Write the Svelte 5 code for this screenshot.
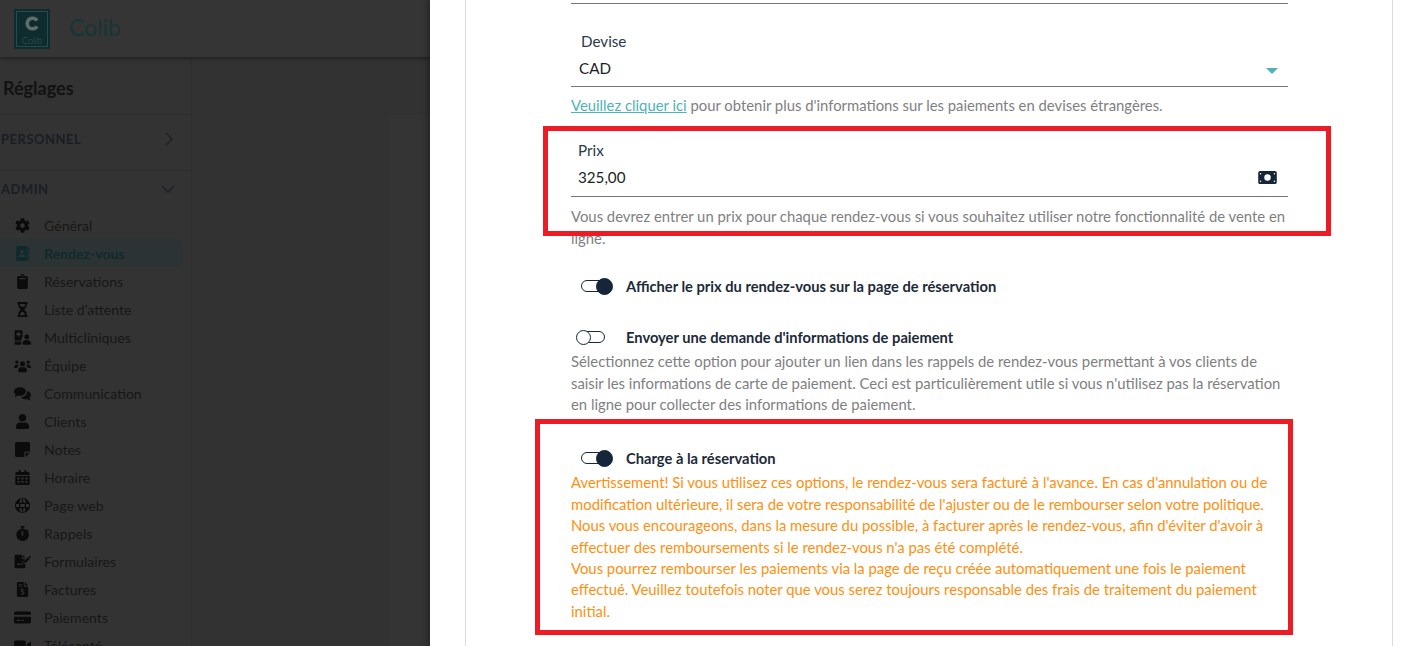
<script>
	const nav = [
		{ label: 'Général', box: '0 0 512 512', d: 'M487.4 315.7l-42.6-24.6c4.3-23.2 4.3-47 0-70.2l42.6-24.6c4.9-2.8 7.1-8.6 5.5-14-11.1-35.6-30-67.8-54.7-94.6-3.8-4.1-10-5.1-14.8-2.3L380.8 110c-17.9-15.4-38.5-27.3-60.8-35.1V25.8c0-5.6-3.9-10.5-9.4-11.7-36.7-8.2-74.3-7.8-109.2 0-5.5 1.2-9.4 6.1-9.4 11.7V75c-22.2 7.9-42.8 19.8-60.8 35.1L88.7 85.5c-4.9-2.8-11-1.9-14.8 2.3-24.7 26.7-43.6 58.9-54.7 94.6-1.7 5.4.6 11.2 5.5 14L67.3 221c-4.3 23.2-4.3 47 0 70.2l-42.6 24.6c-4.9 2.8-7.1 8.6-5.5 14 11.1 35.6 30 67.8 54.7 94.6 3.8 4.1 10 5.1 14.8 2.3l42.6-24.6c17.9 15.4 38.5 27.3 60.8 35.1v49.2c0 5.6 3.9 10.5 9.4 11.7 36.7 8.2 74.3 7.8 109.2 0 5.5-1.2 9.4-6.1 9.4-11.7v-49.2c22.2-7.9 42.8-19.8 60.8-35.1l42.6 24.6c4.9 2.8 11 1.9 14.8-2.3 24.7-26.7 43.6-58.9 54.7-94.6 1.5-5.5-.7-11.3-5.6-14.1zM256 336c-44.1 0-80-35.9-80-80s35.9-80 80-80 80 35.9 80 80-35.9 80-80 80z' },
		{ label: 'Rendez-vous', box: '0 0 24 24', d: 'M4 0h14a2 2 0 0 1 2 2v20a2 2 0 0 1-2 2H4a2 2 0 0 1-2-2V2a2 2 0 0 1 2-2zM11 6a3 3 0 1 0 0 6 3 3 0 0 0 0-6zM5.500 17.500h11c0-2.500-2-4-5.500-4s-5.500 1.500-5.500 4zM21 3h2v5h-2zM21 10h2v5h-2zM21 17h2v4h-2z', active: true },
		{ label: 'Réservations', box: '0 0 24 24', d: 'M9 3a3 3 0 0 1 6 0h3a2.500 2.500 0 0 1 2.500 2.500v16A2.500 2.500 0 0 1 18 24H6a2.500 2.500 0 0 1-2.500-2.500v-16A2.500 2.500 0 0 1 6 3zM12 2a1.300 1.300 0 1 0 0 2.600A1.300 1.300 0 0 0 12 2zM7 6.500v2h10v-2z' },
		{ label: "Liste d'attente", box: '0 0 24 24', d: 'M4 0h16v3h-1c0 5-2.500 7-4.500 9 2 2 4.500 4 4.500 9h1v3H4v-3h1c0-5 2.500-7 4.500-9C7.500 10 5 8 5 3H4zM8 3c0 1.500.300 3 1 4.500h6c.700-1.500 1-3 1-4.500zM8 21h8c0-2.500-1.800-5-4-6-2.200 1-4 3.500-4 6z' },
		{ label: 'Multicliniques', box: '0 0 28 24', d: 'M1 2a2 2 0 0 1 2-2h9a2 2 0 0 1 2 2v8.500a7 7 0 0 0-2 5V17H1zM6 3v2.500H3.500v2.500H6v2.500h3V8h2.500V5.500H9V3zM1 18.500h11V22a2 2 0 0 1-2 2H3a2 2 0 0 1-2-2zM21 7a4 4 0 1 1 0 8 4 4 0 0 1 0-8zM14 22c0-3.500 2.500-6 7-6s7 2.500 7 6a2 2 0 0 1-2 2H16a2 2 0 0 1-2-2z' },
		{ label: 'Équipe', box: '0 0 30 24', d: 'M5 3a3 3 0 1 1 0 6 3 3 0 0 1 0-6zM25 3a3 3 0 1 1 0 6 3 3 0 0 1 0-6zM15 4.500a4.500 4.500 0 1 1 0 9 4.500 4.500 0 0 1 0-9zM0 16c0-3 1.500-5.500 4-5.500h3c.8 0 1.500.2 2 .6-1.800 1-3 3-3.300 5.400H2a2 2 0 0 1-2-.5zM30 16c0-3-1.500-5.500-4-5.500h-3c-.8 0-1.500.2-2 .6 1.800 1 3 3 3.300 5.400H28a2 2 0 0 0 2-.5zM7.500 20c0-3 2-5 4.500-5h6c2.500 0 4.500 2 4.500 5v1.500A2.500 2.500 0 0 1 20 24H10a2.500 2.500 0 0 1-2.500-2.500z' },
		{ label: 'Communication', box: '0 0 30 24', d: 'M10.500 1C16 1 21 4.300 21 8.500S16 16 10.500 16c-1.300 0-2.500-.2-3.600-.5C5 17 3 17.800.5 18c1.500-1.400 2.300-2.800 2.600-4C1 12.500 0 10.600 0 8.500 0 4.300 5 1 10.500 1zM23 7.500c3.800 1 7 3.700 7 7 0 2-1 3.800-3 5.300.3 1.300 1.100 2.700 2.500 4.200-2.500-.2-4.500-1.100-6.300-2.500-1 .3-2.100.5-3.200.5-3.300 0-6.300-1.300-8-3.300 6.500-.2 11.800-4.500 11-11.200z' },
		{ label: 'Clients', box: '0 0 448 512', d: 'M224 256c70.700 0 128-57.300 128-128S294.700 0 224 0 96 57.300 96 128s57.300 128 128 128zm89.600 32h-16.700c-22.200 10.200-46.900 16-72.900 16s-50.600-5.800-72.900-16h-16.700C60.200 288 0 348.200 0 422.400V464c0 26.500 21.500 48 48 48h352c26.500 0 48-21.500 48-48v-41.600c0-74.200-60.200-134.400-134.400-134.400z' },
		{ label: 'Notes', box: '0 0 24 24', d: 'M2.500 0h19A2.500 2.500 0 0 1 24 2.500V15h-7a2 2 0 0 0-2 2v7H2.500A2.500 2.500 0 0 1 0 21.500v-19A2.500 2.500 0 0 1 2.500 0zM24 17l-7 7v-7z' },
		{ label: 'Horaire', box: '0 0 24 24', d: 'M6 0h3v3h6V0h3v3h3a2.500 2.500 0 0 1 2.500 2.500V8H.5V5.500A2.500 2.500 0 0 1 3 3h3zM.5 9.500h23v12A2.500 2.500 0 0 1 21 24H3a2.500 2.500 0 0 1-2.500-2.500zM4 12v3h3.500v-3zM10.200 12v3h3.500v-3zM16.500 12v3H20v-3zM4 17.500v3h3.500v-3zM10.200 17.500v3h3.500v-3zM16.500 17.500v3H20v-3z' },
		{ label: 'Page web', box: '0 0 24 24', d: 'M12 0a12 12 0 1 1 0 24 12 12 0 0 1 0-24zM9 1.800C7.700 3.500 7 5.500 6.700 7.500h3.800c.2-2 .6-4.300 1-6.200-.9 0-1.700.2-2.500.5zM15 1.800c1.300 1.700 2 3.700 2.300 5.700h-3.800c-.2-2-.6-4.300-1-6.200.9 0 1.700.2 2.500.5zM1.800 9.500a11 11 0 0 0 0 5h4.700a24 24 0 0 1 0-5zM8.500 9.500a24 24 0 0 0 0 5h7a24 24 0 0 0 0-5zM17.500 9.500a24 24 0 0 1 0 5h4.700a11 11 0 0 0 0-5zM6.700 16.500c.3 2 1 4 2.300 5.700.8.300 1.600.5 2.500.5-.4-1.900-.8-4.200-1-6.200zM13.500 16.500c-.2 2-.6 4.300-1 6.200.9 0 1.700-.2 2.500-.5 1.300-1.700 2-3.700 2.300-5.700z' },
		{ label: 'Rappels', box: '0 0 24 24', d: 'M9 0h6v2.500h-1.500v1.700c2 .3 3.800 1.100 5.300 2.400l1.200-1.200 1.800 1.800-1.300 1.300A10 10 0 1 1 10.500 4.200V2.500H9zM10.800 8v7.500h2.400V8z' },
		{ label: 'Formulaires', box: '0 0 30 24', d: 'M1 2a2 2 0 0 1 2-2h11v6a1.500 1.500 0 0 0 1.500 1.500H20L13 14.500 12.500 18h-7l2-4 2 2.500 2.500 1h-1l3.500.5L20 13v9a2 2 0 0 1-2 2H3a2 2 0 0 1-2-2zM15.500 0l4.500 5.500h-4.500zM25 4l3 3-10 10-4 1 1-4zM26 3l1.500-1.500 3 3L29 6z' },
		{ label: 'Factures', box: '0 0 24 24', d: 'M5 0h9v6a1.500 1.500 0 0 0 1.500 1.500H21v14A2.500 2.500 0 0 1 18.500 24h-13A2.500 2.500 0 0 1 3 21.500v-19A2.500 2.500 0 0 1 5 0zM6 3v1.500h5V3zM6 6v1.500h5V6zM11.300 10v1.300c-1.400.2-2.300 1.200-2.300 2.400 0 1.400 1 2 2.300 2.400l1.500.4c.5.2.7.4.7.7 0 .4-.4.7-1 .7H10v1.500h1.300V21h1.500v-1.400c1.400-.2 2.300-1.200 2.300-2.400 0-1.400-1-2-2.300-2.400l-1.500-.4c-.5-.2-.7-.4-.7-.7 0-.4.4-.7 1-.7H14v-1.500h-1.200V10zM15.500 0L21 5.500h-5.500z' },
		{ label: 'Paiements', box: '0 0 30 24', d: 'M3 1.500h24A3 3 0 0 1 30 4.500V7H0V4.500A3 3 0 0 1 3 1.500zM0 10.500h30v9a3 3 0 0 1-3 3H3a3 3 0 0 1-3-3zM5 16v2h6v-2zM13 16v2h4v-2z' },
		{ label: 'Télésanté', box: '0 0 30 24', d: 'M3 3h15a3 3 0 0 1 3 3v12a3 3 0 0 1-3 3H3a3 3 0 0 1-3-3V6a3 3 0 0 1 3-3zM23 9l7-4v14l-7-4z' }
	];
</script>

<div class="page">
	<div class="backdrop">
		<header class="topbar">
			<div class="logo">
				<div class="logo-inner">
					<svg viewBox="0 0 24 24" class="logo-c"><path d="M12 2a10 10 0 1 0 8.500 15.300l-4.300-2.500a5 5 0 1 1 0-5.600l4.300-2.500A10 10 0 0 0 12 2z" /></svg>
					<span>Colib</span>
				</div>
			</div>
			<span class="brand">Colib</span>
		</header>
		<div class="under">
			<aside class="sidebar">
				<h2>Réglages</h2>
				<div class="group">
					<span>PERSONNEL</span>
					<svg viewBox="0 0 12 16" class="chev"><path d="M3 2l6 6-6 6" /></svg>
				</div>
				<div class="group admin">
					<span>ADMIN</span>
					<svg viewBox="0 0 16 12" class="chev wide"><path d="M2 3l6 6 6-6" /></svg>
				</div>
				<nav>
					{#each nav as item}
						<div class="nav-item" class:active={item.active}>
							<span class="nav-icon"><svg viewBox={item.box}><path fill-rule="evenodd" d={item.d} /></svg></span>
							<span>{item.label}</span>
						</div>
					{/each}
				</nav>
			</aside>
			<div class="bg-main">
				<div class="bg-card"></div>
			</div>
		</div>
	</div>

	<section class="drawer">
		<div class="card">
			<div class="prev-line"></div>

			<div class="field devise">
				<div class="label">Devise</div>
				<div class="control">
					<span>CAD</span>
					<span class="caret"></span>
				</div>
			</div>
			<p class="hint"><a href="#devises">Veuillez cliquer ici</a> pour obtenir plus d'informations sur les paiements en devises étrangères.</p>

			<div class="field prix">
				<div class="label">Prix</div>
				<div class="control">
					<span>325,00</span>
					<svg class="money" viewBox="0 0 20 14"><path fill-rule="evenodd" d="M2 0h16a2 2 0 0 1 2 2v10a2 2 0 0 1-2 2H2a2 2 0 0 1-2-2V2a2 2 0 0 1 2-2zM10 3.500a3.500 3.500 0 1 0 0 7 3.500 3.500 0 0 0 0-7zM2.500 2.200a.8.8 0 1 0 0 1.600.8.8 0 0 0 0-1.600zM17.500 2.200a.8.8 0 1 0 0 1.600.8.8 0 0 0 0-1.600zM2.500 10.200a.8.8 0 1 0 0 1.600.8.8 0 0 0 0-1.600zM17.500 10.200a.8.8 0 1 0 0 1.600.8.8 0 0 0 0-1.600z" /></svg>
				</div>
			</div>
			<p class="hint prix-hint">Vous devrez entrer un prix pour chaque rendez-vous si vous souhaitez utiliser notre fonctionnalité de vente en ligne.</p>

			<div class="toggle-row first">
				<span class="switch on"><i></i></span>
				<strong>Afficher le prix du rendez-vous sur la page de réservation</strong>
			</div>

			<div class="toggle-row second">
				<span class="switch"><i></i></span>
				<strong>Envoyer une demande d'informations de paiement</strong>
			</div>
			<p class="hint">Sélectionnez cette option pour ajouter un lien dans les rappels de rendez-vous permettant à vos clients de saisir les informations de carte de paiement. Ceci est particulièrement utile si vous n'utilisez pas la réservation en ligne pour collecter des informations de paiement.</p>

			<div class="toggle-row third">
				<span class="switch on"><i></i></span>
				<strong>Charge à la réservation</strong>
			</div>
			<p class="hint warning">
				Avertissement! Si vous utilisez ces options, le rendez-vous sera facturé à l'avance. En cas d'annulation ou de modification ultérieure, il sera de votre responsabilité de l'ajuster ou de le rembourser selon votre politique.<br />
				Nous vous encourageons, dans la mesure du possible, à facturer après le rendez-vous, afin d'éviter d'avoir à effectuer des remboursements si le rendez-vous n'a pas été complété.<br />
				Vous pourrez rembourser les paiements via la page de reçu créée automatiquement une fois le paiement effectué. Veuillez toutefois noter que vous serez toujours responsable des frais de traitement du paiement initial.
			</p>
		</div>

		<!-- red annotation boxes drawn on top of the screenshot -->
		<div class="mark mark-prix"></div>
		<div class="mark mark-charge"></div>
	</section>
</div>

<style>
	:global(body) {
		margin: 0;
		font-family: Lato, "Liberation Sans", sans-serif;
		overflow: hidden;
	}
	.page {
		display: flex;
		width: 1423px;
		height: 646px;
		overflow: hidden;
		position: relative;
	}

	/* dimmed app behind the drawer */
	.backdrop {
		width: 430px;
		flex: none;
		background: #333333;
		display: flex;
		flex-direction: column;
	}
	.topbar {
		height: 57px;
		flex: none;
		background: #353535;
		box-shadow: 0 1px 4px rgba(0, 0, 0, 0.5);
		display: flex;
		align-items: center;
		padding-left: 14px;
		box-sizing: border-box;
		position: relative;
	}
	.logo {
		width: 36px;
		height: 40px;
		background: #0e2c2d;
		padding: 2px;
		box-sizing: border-box;
	}
	.logo-inner {
		height: 100%;
		border: 1px solid #2a4a4a;
		box-sizing: border-box;
		display: flex;
		flex-direction: column;
		align-items: center;
		padding-top: 3px;
		color: #3f5c5a;
		font-size: 9px;
		line-height: 11px;
		font-weight: 300;
	}
	.logo-c {
		width: 17px;
		height: 17px;
		margin-bottom: 3px;
		fill: #616b6a;
	}
	.brand {
		margin-left: 19px;
		font-size: 23px;
		color: #153536;
		margin-top: -3px;
	}
	.under {
		flex: 1;
		display: flex;
		min-height: 0;
	}
	.sidebar {
		width: 192px;
		flex: none;
		box-sizing: border-box;
		border-right: 1px solid #2f2f2f;
		color: #161616;
	}
	.sidebar h2 {
		margin: 0;
		height: 58px;
		box-sizing: border-box;
		padding: 19px 0 0 3px;
		font-size: 18px;
		line-height: 24px;
		font-weight: 700;
		color: #121212;
		border-bottom: 1px solid #2c2c2c;
	}
	.group {
		height: 56px;
		box-sizing: border-box;
		display: flex;
		align-items: center;
		justify-content: space-between;
		padding: 0 16px 8px 1px;
		font-size: 13px;
		font-weight: 700;
		letter-spacing: 0.5px;
		color: #1a1e24;
		border-bottom: 1px solid #2c2c2c;
	}
	.group.admin {
		height: 40px;
		border-bottom: none;
		padding: 0 15px 5px 1px;
	}
	.chev {
		width: 12px;
		height: 16px;
		fill: none;
		stroke: #1c2026;
		stroke-width: 1.4;
	}
	.chev.wide {
		width: 16px;
		height: 12px;
	}
	.nav-item {
		height: 28px;
		display: flex;
		align-items: center;
		font-size: 14.1px;
		color: #171717;
		margin-right: 8px;
	}
	.nav-item.active {
		background: #2c3334;
		border-radius: 0 6px 6px 0;
		color: #0f2a2c;
		font-weight: 700;
	}
	.nav-icon {
		width: 44px;
		flex: none;
		display: flex;
		justify-content: center;
		padding-left: 6px;
		box-sizing: border-box;
	}
	.nav-icon svg {
		width: 17px;
		height: 15px;
		fill: #0b0b0b;
		transform: translateX(-3px);
	}
	.nav-item.active svg {
		fill: #0f2a2c;
	}
	.bg-main {
		flex: 1;
		padding: 58px 0 0 198px;
		background: #323232;
	}
	.bg-card {
		height: 100%;
		background: #343434;
	}

	/* drawer */
	.drawer {
		flex: 1;
		background: #fff;
		padding-left: 35px;
		padding-right: 30px;
		position: relative;
		box-shadow: -2px 0 6px rgba(0, 0, 0, 0.35);
		min-width: 0;
	}
	.card {
		height: 100%;
		box-sizing: border-box;
		border-left: 1px solid #dcdcdc;
		border-right: 1px solid #dcdcdc;
		padding: 0 104px 0 105px;
		color: #1c2a39;
		font-size: 14.85px;
		line-height: 21.4px;
	}
	.prev-line {
		height: 3px;
		border-bottom: 1px solid #757575;
	}
	.field .label {
		padding-left: 10px;
		color: #2b3a48;
		font-size: 15.2px;
		line-height: 20px;
	}
	.field.prix .label {
		padding-left: 7px;
	}
	.field.devise {
		padding-top: 27px;
	}
	.field.prix {
		padding-top: 24px;
	}
	.control {
		display: flex;
		align-items: center;
		justify-content: space-between;
		height: 36px;
		box-sizing: border-box;
		padding: 0 10px 0 8px;
		font-size: 15.2px;
		color: #1b1f24;
		border-bottom: 1px solid #757575;
	}
	.prix .control {
		height: 37px;
		padding: 0 11px 1px 7px;
	}
	.caret {
		width: 0;
		height: 0;
		border-left: 6px solid transparent;
		border-right: 6px solid transparent;
		border-top: 6px solid #4fb3b7;
		margin-top: 4px;
	}
	.money {
		width: 19px;
		height: 13px;
		fill: #16263a;
	}
	.hint {
		margin: 8px 0 0;
		color: #7f7f7f;
	}
	.hint a {
		color: #4fb3b7;
	}
	.prix-hint {
		margin-top: 9px;
	}
	.toggle-row {
		display: flex;
		align-items: center;
		height: 22px;
		padding-left: 10px;
	}
	.toggle-row.first {
		margin-top: 26px;
	}
	.toggle-row.second {
		margin-top: 29px;
	}
	.toggle-row.third {
		margin-top: 32px;
	}
	.toggle-row + .hint {
		margin-top: 3px;
	}
	.toggle-row strong {
		font-weight: 700;
		font-size: 14.7px;
		color: #1c2a39;
		margin-left: 21px;
	}
	.switch {
		width: 24px;
		height: 12px;
		box-sizing: border-box;
		border: 1px solid #16263a;
		border-radius: 7px;
		position: relative;
		flex: none;
	}
	.switch i {
		position: absolute;
		left: -6px;
		top: -2px;
		width: 15px;
		height: 15px;
		box-sizing: border-box;
		border: 1px solid #16263a;
		border-radius: 50%;
		background: #fff;
	}
	.switch.on i {
		left: 14px;
		top: -3px;
		width: 17px;
		height: 17px;
		background: #16263a;
	}
	.warning {
		color: #ff8f0f;
	}
	.mark {
		position: absolute;
		border: 5px solid #ed1c24;
		box-sizing: border-box;
	}
	.mark-prix {
		left: 113px;
		top: 126px;
		width: 788px;
		height: 110px;
	}
	.mark-charge {
		left: 105px;
		top: 419px;
		width: 758px;
		height: 216px;
	}
</style>
